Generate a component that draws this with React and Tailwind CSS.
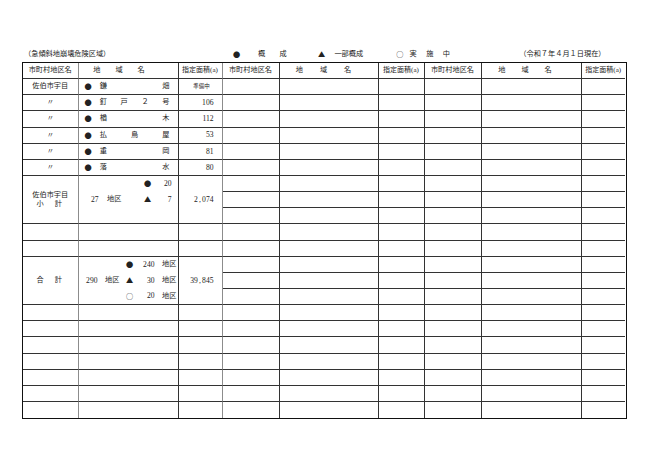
import React from "react";

const Mark = ({ children, className = "" }) => (
  <span className={"inline-flex w-[7.2px] shrink-0 justify-center font-['Noto_Sans_CJK_JP'] " + className}>
    {children}
  </span>
);

function cellCls(col, lastRow) {
  let c = "flex items-center min-w-0 overflow-hidden border-[#333]";
  if (col < 8) c += " border-r";
  if (col === 0 || col === 2) c += " border-r-[#8c8c8c]";
  if (!lastRow) c += " border-b";
  return c;
}

const left = [
  { a: "佐伯市宇目", name: ["鎌", "畑"], area: "準備中", small: true },
  { a: "〃", name: ["釘", "戸", "２", "号"], area: "106" },
  { a: "〃", name: ["楢", "木"], area: "112" },
  { a: "〃", name: ["払", "鳥", "屋"], area: "53" },
  { a: "〃", name: ["重", "岡"], area: "81" },
  { a: "〃", name: ["落", "水"], area: "80" },
];

const Num = ({ v }) => {
  const parts = v.split(",");
  if (parts.length === 1) return <span>{v}</span>;
  return (
    <span>
      {parts[0]}
      <span className="px-[1.2px]">,</span>
      {parts[1]}
    </span>
  );
};

function EmptyCells({ from, row, last }) {
  const cells = [];
  for (let c = from; c < 9; c++) {
    cells.push(<div key={"e" + row + "-" + c} className={cellCls(c, last)} />);
  }
  return cells;
}

function HeaderCells() {
  const out = [];
  for (let s = 0; s < 3; s++) {
    out.push(
      <div key={"h1" + s} className={cellCls(s * 3, false) + " justify-center whitespace-nowrap"}>
        市町村地区名
      </div>
    );
    const pr = s === 0 ? "pr-[18px] gap-[15px]" : s === 1 ? "pr-[10px] gap-[17px]" : "pr-[12px] gap-[16px]";
    out.push(
      <div key={"h2" + s} className={cellCls(s * 3 + 1, false) + " justify-center " + pr}>
        <span>地</span>
        <span>域</span>
        <span>名</span>
      </div>
    );
    out.push(
      <div key={"h3" + s} className={cellCls(s * 3 + 2, false) + " justify-center whitespace-nowrap text-[7px]"}>
        指定面積(a)
      </div>
    );
  }
  return out;
}

export default function App() {
  const rows = [];
  for (let r = 0; r < 21; r++) {
    const last = r === 20;
    if (r < 6) {
      const d = left[r];
      rows.push(
        <div key={"a" + r} className={cellCls(0, last) + " justify-center whitespace-nowrap"}>
          {d.a}
        </div>
      );
      rows.push(
        <div key={"b" + r} className={cellCls(1, last) + " pl-[6px] pr-[8px]"}>
          <Mark>●</Mark>
          <span className="ml-[8px] flex flex-1 justify-between">
            {d.name.map((ch, i) => (
              <span key={i}>{ch}</span>
            ))}
          </span>
        </div>
      );
      rows.push(
        d.small ? (
          <div key={"c" + r} className={cellCls(2, last) + " justify-center pl-[3px] text-[5.5px]"}>
            {d.area}
          </div>
        ) : (
          <div key={"c" + r} className={cellCls(2, last) + " justify-end pr-[8px] text-[7.6px]"}>
            <Num v={d.area} />
          </div>
        )
      );
      rows.push(...EmptyCells({ from: 3, row: r, last }));
    } else if (r === 6) {
      rows.push(
        <div key="sub-a" className={cellCls(0, false) + " row-span-3 flex-col justify-center leading-[8.6px]"}>
          <span>佐伯市宇目</span>
          <span className="tracking-[2px]">小　計</span>
        </div>
      );
      rows.push(
        <div key="sub-b" className={cellCls(1, false) + " row-span-3 items-stretch"}>
          <div className="grid h-full w-full grid-rows-3 grid-cols-[20px_23px_22px_8px_20px_6px] items-center">
            <span />
            <span />
            <span />
            <span className="flex justify-center"><Mark>●</Mark></span>
            <span className="text-right text-[7.6px]">20</span>
            <span />
            <span className="text-right text-[7.6px]">27</span>
            <span className="text-right">地区</span>
            <span />
            <span className="flex justify-center"><Mark>▲</Mark></span>
            <span className="text-right text-[7.6px]">7</span>
            <span />
          </div>
        </div>
      );
      rows.push(
        <div key="sub-c" className={cellCls(2, false) + " row-span-3 items-stretch"}>
          <div className="grid h-full w-full grid-rows-3 items-center">
            <span />
            <span className="pr-[8px] text-right text-[7.6px]"><Num v="2,074" /></span>
            <span />
          </div>
        </div>
      );
      rows.push(...EmptyCells({ from: 3, row: r, last }));
    } else if (r === 7 || r === 8 || r === 12 || r === 13) {
      rows.push(...EmptyCells({ from: 3, row: r, last }));
    } else if (r === 11) {
      rows.push(
        <div key="tot-a" className={cellCls(0, false) + " row-span-3 justify-center"}>
          <span className="tracking-[2px]">合　計</span>
        </div>
      );
      rows.push(
        <div key="tot-b" className={cellCls(1, false) + " row-span-3 items-stretch"}>
          <div className="grid h-full w-full grid-rows-3 grid-cols-[19px_22px_6px_8px_21px_22px_1px] items-center">
            <span />
            <span />
            <span />
            <span className="flex justify-center"><Mark>●</Mark></span>
            <span className="text-right text-[7.6px]">240</span>
            <span className="text-right">地区</span>
            <span />
            <span className="text-right text-[7.6px]">290</span>
            <span className="text-right">地区</span>
            <span />
            <span className="flex justify-center"><Mark>▲</Mark></span>
            <span className="text-right text-[7.6px]">30</span>
            <span className="text-right">地区</span>
            <span />
            <span />
            <span />
            <span />
            <span className="flex justify-center"><Mark>○</Mark></span>
            <span className="text-right text-[7.6px]">20</span>
            <span className="text-right">地区</span>
            <span />
          </div>
        </div>
      );
      rows.push(
        <div key="tot-c" className={cellCls(2, false) + " row-span-3 justify-end pr-[8px] text-[7.6px]"}>
          <Num v="39,845" />
        </div>
      );
      rows.push(...EmptyCells({ from: 3, row: r, last }));
    } else {
      rows.push(...EmptyCells({ from: 0, row: r, last }));
    }
  }

  return (
    <div className="h-[459px] w-[650px] bg-white pt-[50px] text-[7.2px] leading-none text-[#222] font-['Liberation_Serif','Noto_Sans_CJK_JP',serif]">
      <div className="flex h-[10px] items-center whitespace-nowrap">
        <span className="ml-[24px] shrink-0">（急傾斜地崩壊危険区域）</span>
        <Mark className="ml-[122.7px]">●</Mark>
        <span className="ml-[17.8px] shrink-0">概</span>
        <span className="ml-[14.4px] shrink-0">成</span>
        <Mark className="ml-[31.2px]">▲</Mark>
        <span className="ml-[9.3px] shrink-0">一部概成</span>
        <Mark className="ml-[33px]">○</Mark>
        <span className="ml-[6.1px] shrink-0">実</span>
        <span className="ml-[9.5px] shrink-0">施</span>
        <span className="ml-[9.5px] shrink-0">中</span>
        <span className="ml-[69.2px] shrink-0">（令和７年４月１日現在）</span>
      </div>
      <div className="ml-[22px] mt-[2px] grid w-[605px] grid-cols-[55.5px_100px_44px_57px_99px_46px_57px_100px_43.5px] grid-rows-[16.2px_repeat(21,16.15px)] border-[1.5px] border-[#111]">
        <HeaderCells />
        {rows}
      </div>
    </div>
  );
}
